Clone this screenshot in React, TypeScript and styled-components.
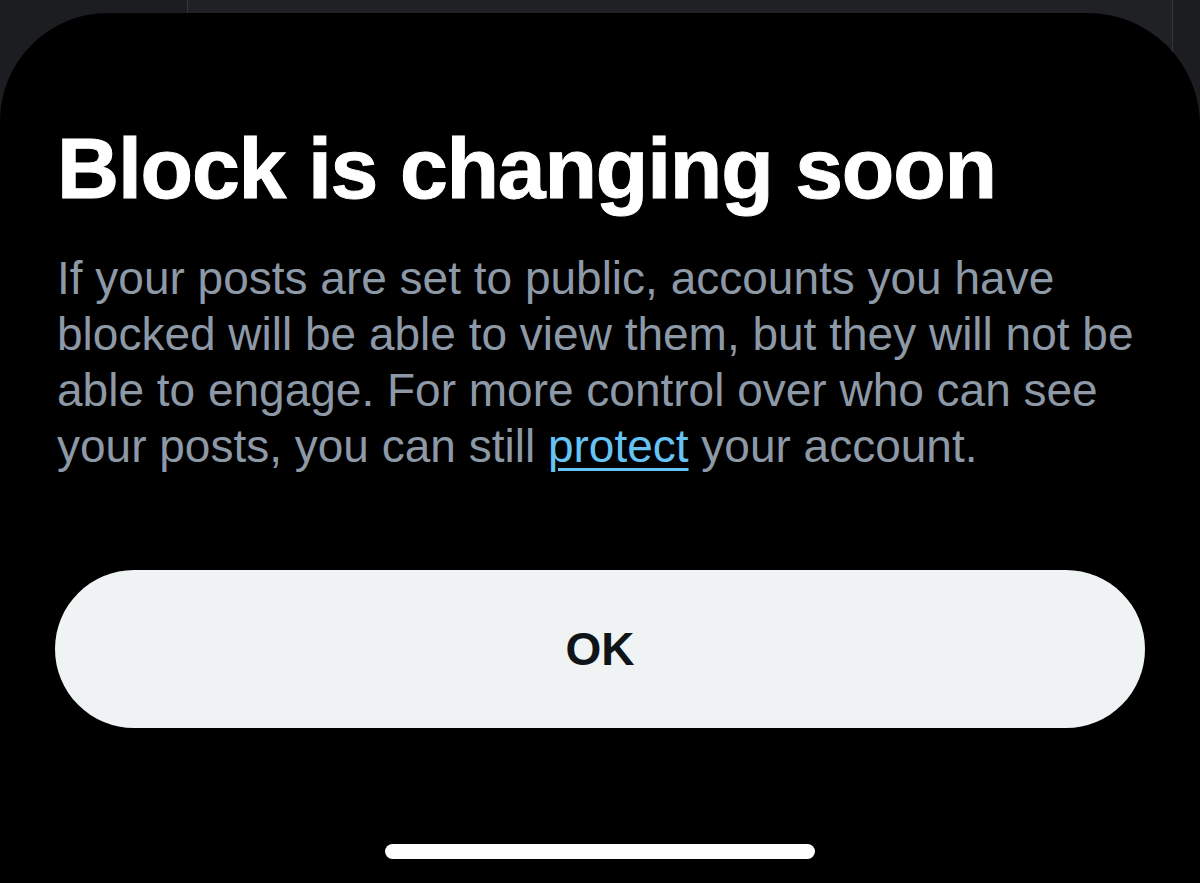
import React from "react";
import styled, { createGlobalStyle } from "styled-components";

const Global = createGlobalStyle`
  html, body { margin: 0; padding: 0; background: #1c1d21; }
  body { width: 1200px; height: 883px; overflow: hidden; font-family: "Liberation Sans", Arial, sans-serif; }
  #root { width: 1200px; height: 883px; }
`;

const Screen = styled.div`
  position: relative;
  width: 1200px;
  height: 883px;
  overflow: hidden;
  display: flex;
  flex-direction: column;
  padding-top: 13px;
  box-sizing: border-box;
`;

const Backdrop = styled.div`
  position: absolute;
  inset: 0;
  display: grid;
  grid-template-columns: 187px 1fr 28px;
  z-index: 0;
`;

const BackCol = styled.div<{ $tone: string; $line?: boolean }>`
  background: ${(p) => p.$tone};
  border-left: ${(p) => (p.$line ? "1px solid #34363b" : "none")};
`;

const Sheet = styled.section`
  position: relative;
  z-index: 1;
  flex: 1;
  background: #000;
  border-radius: 108px 112px 0 0 / 108px 112px 0 0;
  display: flex;
  flex-direction: column;
  padding: 0 40px 0 57px;
`;

const Title = styled.h1`
  margin: 105px 0 0 0;
  color: #fff;
  font-family: "Liberation Sans", Arial, sans-serif;
  font-weight: 700;
  font-size: 86px;
  line-height: 100px;
  letter-spacing: -1.2px;
  -webkit-text-stroke: 1px #fff;
`;

const Body = styled.p`
  margin: 32px 0 0 0;
  color: #8d99a6;
  font-family: "Liberation Sans", Arial, sans-serif;
  font-size: 46px;
  line-height: 56px;
`;

const Link = styled.a`
  color: #66c4f5;
  text-decoration: underline;
  text-decoration-thickness: 3px;
  text-underline-offset: 6px;
`;

const OkButton = styled.button`
  margin: 0 0 0 -2px;
  width: 1090px;
  height: 158px;
  border: none;
  border-radius: 79px;
  background: #eff3f4;
  color: #0f1419;
  font-family: "Liberation Sans", Arial, sans-serif;
  font-weight: 700;
  font-size: 46px;
  cursor: pointer;
`;

const Actions = styled.div`
  margin-top: auto;
  display: flex;
  flex-direction: column;
  padding-bottom: 24px;
  gap: 116px;
`;

const HomeBar = styled.div`
  margin: 0 auto 0 328px;
  width: 430px;
  height: 15px;
  border-radius: 8px;
  background: #fff;
`;

export default function App() {
  return (
    <Screen>
      <Global />
      <Backdrop>
        <BackCol $tone="#1c1d21" />
        <BackCol $tone="#1f2125" $line />
        <BackCol $tone="#1c1d21" $line />
      </Backdrop>
      <Sheet>
        <Title>Block is changing soon</Title>
        <Body>
          If your posts are set to public, accounts you have blocked will be able to view them, but they will not be
          able to engage. For more control over who can see your posts, you can still <Link href="#">protect</Link> your
          account.
        </Body>
        <Actions>
          <OkButton>OK</OkButton>
          <HomeBar />
        </Actions>
      </Sheet>
    </Screen>
  );
}
